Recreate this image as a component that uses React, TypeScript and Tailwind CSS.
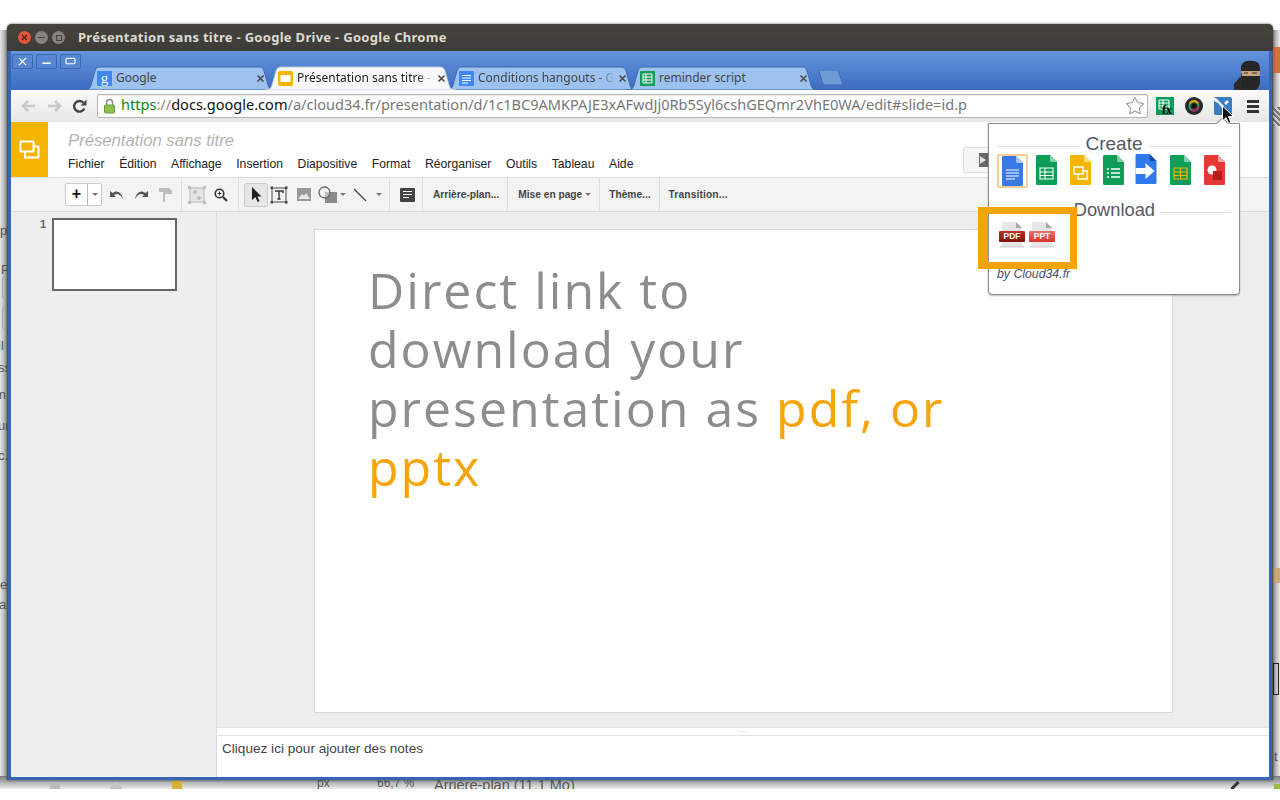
import React from "react";
import { Star } from "lucide-react";

const chromeFont = "font-['Noto_Sans',sans-serif]";
const docsFont = "font-['Liberation_Sans',Arial,sans-serif]";

function TabShape({ active }: { active?: boolean }) {
  return (
    <svg className="absolute inset-0 w-full h-full" viewBox="0 0 191 24" preserveAspectRatio="none">
      <path
        d="M0 24 C5 24 6 22 7 19 L11 5 C12 2 13 1 17 1 L174 1 C178 1 179 2 180 5 L184 19 C185 22 186 24 191 24 Z"
        fill={active ? "#f9f9f9" : "#9dc2ef"}
        stroke={active ? "#b9c6dc" : "#3f69ad"}
        strokeWidth="1"
      />
    </svg>
  );
}

function Tab({ title, active, fade, children }: { title: string; active?: boolean; fade?: boolean; children: React.ReactNode }) {
  return (
    <div className={`relative w-[191px] h-[24px] -mr-[10px] ${active ? "z-10" : ""}`}>
      <TabShape active={active} />
      <div className="relative flex items-center h-full pl-[13px] pr-[10px]">
        <span className="w-[15px] h-[15px] shrink-0 mr-[4px]">{children}</span>
        <span
          className={`w-[137px] overflow-hidden whitespace-nowrap text-[12px] ${chromeFont} ${active ? "text-[#222]" : "text-[#444]"} ${
            fade ? "[mask-image:linear-gradient(to_right,black_88%,transparent)]" : ""
          }`}
        >
          {title}
        </span>
        <svg className="ml-auto" width="9" height="9" viewBox="0 0 9 9">
          <path d="M1.5 1.5 L7.5 7.5 M7.5 1.5 L1.5 7.5" stroke="#4a4a4a" strokeWidth="1.6" />
        </svg>
      </div>
    </div>
  );
}

function SheetFavicon() {
  return (
    <svg viewBox="0 0 15 15" className="w-full h-full">
      <rect width="15" height="15" rx="1" fill="#0f9d58" />
      <path d="M3 3 H12 V12 H3 Z M3 6 H12 M3 9 H12 M6 3 V12" stroke="#fff" fill="none" />
    </svg>
  );
}

function FileIcon({ color, dark, children, className }: { color: string; dark: string; children?: React.ReactNode; className?: string }) {
  return (
    <svg viewBox="0 0 21 30" className={className ?? "w-[21px] h-[30px]"}>
      <path d="M1.5 0 H14 L21 7 V28.5 C21 29.5 20.5 30 19.5 30 H1.5 C.5 30 0 29.5 0 28.5 V1.5 C0 .5 .5 0 1.5 0 Z" fill={color} />
      <path d="M14 0 L21 7 H15.5 C14.6 7 14 6.4 14 5.5 Z" fill={dark} />
      {children}
    </svg>
  );
}

function Sep() {
  return <div className="w-px h-[34px] bg-[#dedede] shrink-0" />;
}

function Caret({ className = "" }: { className?: string }) {
  return <span className={`w-0 h-0 border-x-[3px] border-x-transparent border-t-[3px] border-t-[#777] ${className}`} />;
}

function PdfIcon({ label, from, to, ml }: { label: string; from: string; to: string; ml?: string }) {
  return (
    <div className={`relative w-[26px] h-[27px] ${ml ?? ""}`}>
      <svg viewBox="0 0 26 27" className="absolute inset-0">
        <path d="M3 1 H17 L23 7 V25 H3 Z" fill="#e6e6e6" />
        <path d="M17 1 L23 7 H17 Z" fill="#a9a9a9" />
        <rect x="1" y="25" width="24" height="1.5" fill="#d5d5d5" />
      </svg>
      <div
        className={`absolute left-0 top-[10px] w-[26px] h-[11px] rounded-[1px] text-white text-[8.5px] font-bold leading-[11px] text-center ${docsFont} ${from} ${to} bg-gradient-to-b`}
      >
        {label}
      </div>
    </div>
  );
}

function BehindText({ children, top, left }: { children: string; top: number; left: number }) {
  return (
    <span className={`absolute ${docsFont} text-[13px] text-[#555]`} style={{ top, left }}>
      {children}
    </span>
  );
}

export default function App() {
  return (
    <div className="relative w-[1280px] h-[800px] bg-white overflow-hidden">
      {/* what shows behind the chrome window */}
      <div className="absolute left-0 top-[30px] w-[8px] h-[759px] bg-gradient-to-r from-[#e6e6e6] to-[#8f8f8f] overflow-hidden">
        <BehindText top={191} left={0}>p</BehindText>
        <BehindText top={230} left={1}>P</BehindText>
        <div className="absolute left-[2px] top-[247px] w-[8px] h-[22px] border border-[#aaa] rounded-[2px]" />
        <div className="absolute left-[2px] top-[277px] w-[8px] h-[22px] border border-[#aaa] rounded-[2px]" />
        <BehindText top={306} left={-2}>il</BehindText>
        <BehindText top={328} left={-2}>ss</BehindText>
        <BehindText top={355} left={-5}>m</BehindText>
        <BehindText top={386} left={-2}>ur</BehindText>
        <BehindText top={416} left={-2}>c.</BehindText>
        <BehindText top={545} left={0}>e</BehindText>
        <BehindText top={565} left={-1}>ai</BehindText>
      </div>
      <div className="absolute left-[1272px] top-[30px] w-[8px] h-[759px] bg-gradient-to-r from-[#8a8a8a] to-[#ececec] overflow-hidden">
        <div className="absolute left-[2px] top-[17px] w-[6px] h-[26px] bg-[#dd6b3d]" />
        <div className="absolute left-[1px] top-[77px] w-[7px] h-[19px] bg-[repeating-linear-gradient(45deg,#777_0,#777_2px,#ccc_2px,#ccc_4px)]" />
        <div className="absolute left-0 top-[538px] w-[8px] h-[15px] bg-[#c9a877]" />
        <div className="absolute left-[1px] top-[633px] w-[6px] h-[32px] border border-[#222]" />
        <BehindText top={717} left={2}>t</BehindText>
      </div>
      <div className="absolute left-0 top-[776px] w-[1280px] h-[13px] bg-gradient-to-b from-[#7d7d7d] to-[#ededed] overflow-hidden">
        <span className="absolute left-[50px] top-[6px] w-[10px] h-[7px] rounded-t-full bg-[#bbb]" />
        <span className="absolute left-[110px] top-[6px] w-[12px] h-[7px] rounded-t-full bg-[#c4c4c4]" />
        <span className="absolute left-[172px] top-[5px] w-[10px] h-[8px] bg-[#d9b13a]" />
        <span className={`absolute left-[317px] top-[-2px] text-[12px] text-[#555] ${docsFont}`}>px</span>
        <span className={`absolute left-[377px] top-[-2px] text-[12px] text-[#555] ${docsFont}`}>66,7 %</span>
        <span className={`absolute left-[434px] top-[-1px] text-[14.5px] text-[#555] ${docsFont}`}>Arrière-plan (11.1 Mo)</span>
        <span className="absolute left-[1230px] top-[8px] w-[10px] h-[3px] bg-[#333] -rotate-45" />
        <span className="absolute left-[1274px] top-[8px] w-[6px] h-[5px] bg-[#9bbb3b]" />
      </div>

      <div className="relative ml-[7px] mt-[24px] w-[1266px] h-[756px] flex flex-col rounded-t-[5px] overflow-hidden bg-[#555] shadow-[0_0_3px_rgba(0,0,0,0.6)]">
        {/* title bar */}
        <div className="h-[27px] shrink-0 flex items-center bg-gradient-to-b from-[#45443f] to-[#3c3b37] pl-[11px]">
          <span className="w-[13px] h-[13px] rounded-full bg-[#e2553c] flex items-center justify-center">
            <svg width="7" height="7" viewBox="0 0 7 7"><path d="M1 1 L6 6 M6 1 L1 6" stroke="#4b2017" strokeWidth="1.2" /></svg>
          </span>
          <span className="w-[13px] h-[13px] ml-[4px] rounded-full bg-[#85847f] flex items-center justify-center">
            <span className="w-[7px] h-[1.5px] bg-[#45443f]" />
          </span>
          <span className="w-[13px] h-[13px] ml-[4px] rounded-full bg-[#85847f] flex items-center justify-center">
            <span className="w-[6px] h-[6px] border border-[#45443f]" />
          </span>
          <span className={`ml-[13px] text-[13px] font-bold text-[#dfdbd2] tracking-[0.29px] whitespace-nowrap ${chromeFont}`}>
            Présentation sans titre - Google Drive - Google Chrome
          </span>
        </div>

        <div className="flex-1 min-h-0 mx-px flex flex-col border-x-[3px] border-b-[3px] border-[#3565b5] bg-[#3565b5]">
          {/* tab strip */}
          <div className="h-[39px] shrink-0 flex items-end bg-gradient-to-b from-[#6494dc] to-[#3c6cc0] relative">
            <div className="self-start mt-[3px] ml-[1px] flex gap-[3px]">
              {[
                <path key="x" d="M6.5 2.5 L14.5 10.5 M14.5 2.5 L6.5 10.5" stroke="#fff" strokeWidth="1.5" />,
                <path key="m" d="M6 8.5 H15" stroke="#fff" strokeWidth="1.6" />,
                <rect key="r" x="5.5" y="3" width="10" height="6" rx="1.5" stroke="#fff" strokeWidth="1.3" fill="none" />,
              ].map((glyph, i) => (
                <svg key={i} width="21" height="15" viewBox="0 0 21 13" className="rounded-[2px] border border-[#3c68b0] bg-[#5787d2]">
                  {glyph}
                </svg>
              ))}
            </div>
            <div className="flex ml-[3px]">
              <Tab title="Google">
                <svg viewBox="0 0 15 15" className="w-full h-full">
                  <rect width="15" height="15" rx="1" fill="#4285f4" />
                  <text x="7.5" y="11.5" textAnchor="middle" fontSize="15" fontFamily="Liberation Serif, serif" fill="#fff">g</text>
                </svg>
              </Tab>
              <Tab title="Présentation sans titre - Google Drive" active fade>
                <svg viewBox="0 0 15 15" className="w-full h-full">
                  <rect width="15" height="15" rx="2" fill="#f4b400" />
                  <rect x="2.5" y="4" width="10" height="7" fill="#fff" />
                </svg>
              </Tab>
              <Tab title="Conditions hangouts - Google Drive" fade>
                <svg viewBox="0 0 15 15" className="w-full h-full">
                  <rect width="15" height="15" rx="1" fill="#4285f4" />
                  <path d="M3 4.5 H12 M3 7 H12 M3 9.5 H12 M3 12 H9" stroke="#fff" />
                </svg>
              </Tab>
              <Tab title="reminder script">
                <SheetFavicon />
              </Tab>
            </div>
            <svg className="ml-[11px] mb-[5px]" width="24" height="15" viewBox="0 0 24 15">
              <path d="M0 1 C0 .5 .5 0 1 0 L17 0 C18 0 19 1 19.5 2 L23.5 13 C24 14 23.5 15 22 15 L7 15 C5 15 4 14 3.5 13 Z" fill="#6f9ad8" stroke="#3f69ad" />
            </svg>
            {/* ninja avatar */}
            <svg className="ml-auto mr-[7px]" width="28" height="30" viewBox="0 0 28 30">
              <path d="M0 24 L6 17 L9 19 L9 30 L0 30 Z" fill="#2b2b2b" />
              <path d="M7 30 L7 8 C7 3 11 0 18 1 C23 1 26 3 26 9 L26 20 C26 26 24 28 22 30 Z" fill="#262626" />
              <path d="M7 11 H26 V16 H8 Z" fill="#c9a27a" />
              <path d="M10 13 H14 M18 13 H23" stroke="#333" strokeWidth="1.2" />
            </svg>
          </div>

          {/* omnibox row */}
          <div className="h-[32px] shrink-0 flex items-center bg-gradient-to-b from-[#fbfbfb] to-[#e6e6e6] relative z-0">
            <svg className="ml-[9px]" width="17" height="14" viewBox="0 0 17 14">
              <path d="M15 7 H3 M8 2 L3 7 L8 12" stroke="#c9c9c9" strokeWidth="2.6" fill="none" />
            </svg>
            <svg className="ml-[9px]" width="17" height="14" viewBox="0 0 17 14">
              <path d="M2 7 H14 M9 2 L14 7 L9 12" stroke="#c9c9c9" strokeWidth="2.6" fill="none" />
            </svg>
            <svg className="ml-[9px]" width="15" height="15" viewBox="0 0 15 15">
              <path d="M12.3 9.5 A5.3 5.3 0 1 1 11.2 3.6" stroke="#444" strokeWidth="2.4" fill="none" />
              <path d="M8.5 6.5 H14.5 V0.5 Z" fill="#444" />
            </svg>
            <div className="ml-[10px] w-[1051px] h-[24px] flex items-center bg-white border border-[#b5b5b5] rounded-[2px] shadow-[inset_0_1px_1px_rgba(0,0,0,0.08)]">
              <svg className="ml-[5px]" width="13" height="16" viewBox="0 0 13 16">
                <path d="M3.5 7 V4.5 A3 3 0 0 1 9.5 4.5 V7" stroke="#8a8a8a" strokeWidth="1.5" fill="none" />
                <rect x="1.5" y="7" width="10" height="8" rx="1" fill="#8cc152" stroke="#6b9a3a" />
              </svg>
              <span className={`ml-[5px] mb-[2px] text-[14.55px] whitespace-nowrap ${chromeFont}`}>
                <span className="text-[#0a8a0a]">https</span>
                <span className="text-[#888]">://</span>
                <span className="text-[#111]">docs.google.com</span>
                <span className="text-[#777]">/a/cloud34.fr/presentation/d/1c1BC9AMKPAJE3xAFwdJj0Rb5Syl6cshGEQmr2VhE0WA/edit#slide=id.p</span>
              </span>
              <Star className="ml-auto mr-[2px] w-[20px] h-[20px] text-[#999]" strokeWidth={1.3} />
            </div>
            <svg className="ml-[8px]" width="18" height="18" viewBox="0 0 18 18">
              <rect width="18" height="18" fill="#0f9d58" />
              <path d="M3 3 H13 V12 H3 Z M3 6 H13 M3 9 H13 M7 3 V12" stroke="#fff" fill="none" />
              <text x="6" y="17" fontSize="12" fontWeight="700" fontFamily="Liberation Serif, serif" fill="#000">fx</text>
            </svg>
            <svg className="ml-[11px]" width="18" height="18" viewBox="0 0 18 18">
              <circle cx="9" cy="9" r="9" fill="#2a2a2a" />
              <circle cx="9" cy="9" r="4.5" fill="none" stroke="#26a269" strokeWidth="2" />
              <path d="M5 6.5 A4.5 4.5 0 0 1 13 6.5" stroke="#e5a50a" strokeWidth="2" fill="none" />
              <path d="M13.2 10 A4.5 4.5 0 0 1 7 13" stroke="#c01c6b" strokeWidth="2" fill="none" />
              <circle cx="9" cy="9" r="2" fill="#111" />
            </svg>
            <svg className="ml-[11px]" width="18" height="18" viewBox="0 0 18 18">
              <rect width="18" height="18" rx="2" fill="#3a7dbf" />
              <path d="M0 1 C3 1 4 3 6 5 L10 9 L8 11 L4 6 L0 4 Z M13 3 L10 6 L12 8 L15 5 Z" fill="#e8f1fa" />
            </svg>
            <div className="ml-[15px] flex flex-col gap-[2px]">
              <span className="w-[12px] h-[3px] bg-[#333]" />
              <span className="w-[12px] h-[3px] bg-[#333]" />
              <span className="w-[12px] h-[3px] bg-[#333]" />
            </div>
          </div>

          {/* slides app */}
          <div className={`flex-1 min-h-0 flex flex-col bg-white ${docsFont}`}>
            <div className="h-[56px] shrink-0 flex border-b border-[#dcdcdc] bg-white">
              <div className="w-[37px] flex items-center justify-center bg-[#f4b400]">
                <svg width="21" height="19" viewBox="0 0 21 19">
                  <path d="M1.5 1.5 H14.5 V11.5 H1.5 Z M6 11.5 V17.5 H19.5 V6.5 H14.5" stroke="#fff" strokeWidth="2" fill="none" strokeLinejoin="round" />
                </svg>
              </div>
              <div className="ml-[20px] flex flex-col">
                <div className="mt-[8px] h-[22px] text-[16.7px] italic leading-[22px] text-[#b3b3b3] whitespace-nowrap">Présentation sans titre</div>
                <div className="mt-[5px] flex gap-[14.6px] text-[12.2px] leading-[15px] text-[#222] whitespace-nowrap">
                  <span>Fichier</span>
                  <span>Édition</span>
                  <span>Affichage</span>
                  <span>Insertion</span>
                  <span>Diapositive</span>
                  <span>Format</span>
                  <span>Réorganiser</span>
                  <span>Outils</span>
                  <span>Tableau</span>
                  <span>Aide</span>
                </div>
              </div>
            </div>

            <div className="h-[34px] shrink-0 flex items-center bg-[#f3f3f3] border-b border-[#dcdcdc] whitespace-nowrap">
              <div className="ml-[54px] w-[37px] h-[23px] flex bg-white border border-[#ccc] rounded-[2px]">
                <span className="w-[21px] text-center text-[16px] leading-[19px] font-bold text-[#111]">+</span>
                <span className="flex-1 flex items-center justify-center border-l border-[#bbb]"><Caret /></span>
              </div>
              <svg className="ml-[8px]" width="15" height="10" viewBox="0 0 15 10">
                <path d="M0 1 V7 H6 L4 5 C7 3 10 4 13 9 C12 3 7 -1 2.5 3 Z" fill="#555" />
              </svg>
              <svg className="ml-[8px]" width="15" height="10" viewBox="0 0 15 10">
                <path d="M15 1 V7 H9 L11 5 C8 3 5 4 2 9 C3 3 8 -1 12.5 3 Z" fill="#555" />
              </svg>
              <svg className="ml-[10px]" width="15" height="14" viewBox="0 0 15 14">
                <path d="M1 0 H12 V4 H1 Z M12 2 H14 V6 H7 V14 H5 V4" fill="#bdbdbd" />
              </svg>
              <div className="ml-[8px]"><Sep /></div>
              <svg className="ml-[6px]" width="18" height="18" viewBox="0 0 18 18">
                <path d="M2 2 H16 V16 H2 Z" stroke="#bbb" fill="#e4e4e4" />
                <rect x="0" y="0" width="3" height="3" fill="#bbb" />
                <rect x="15" y="0" width="3" height="3" fill="#bbb" />
                <rect x="0" y="15" width="3" height="3" fill="#bbb" />
                <rect x="15" y="15" width="3" height="3" fill="#bbb" />
                <path d="M5 6 H9 M7 4 V8 M9 12 H13 M11 10 V14" stroke="#aaa" />
              </svg>
              <svg className="ml-[8px]" width="14" height="14" viewBox="0 0 14 14">
                <circle cx="5.5" cy="5.5" r="4.3" stroke="#333" strokeWidth="1.6" fill="none" />
                <path d="M9 9 L13 13" stroke="#333" strokeWidth="2.2" />
                <path d="M3.5 5.5 H7.5 M5.5 3.5 V7.5" stroke="#333" />
              </svg>
              <div className="ml-[10px]"><Sep /></div>
              <div className="ml-[5px] w-[24px] h-[24px] flex items-center justify-center bg-[#e6e6e6] border border-[#ccc] rounded-[2px]">
                <svg width="11" height="15" viewBox="0 0 11 15">
                  <path d="M1 0 L10.5 9.5 H6.5 L8.5 14 L6.5 15 L4.5 10 L1 13 Z" fill="#222" />
                </svg>
              </div>
              <svg className="ml-[2px]" width="18" height="18" viewBox="0 0 18 18">
                <path d="M2 2 H16 V16 H2 Z" stroke="#444" fill="none" />
                <rect x="0.5" y="0.5" width="2.5" height="2.5" fill="#444" />
                <rect x="15" y="0.5" width="2.5" height="2.5" fill="#444" />
                <rect x="0.5" y="15" width="2.5" height="2.5" fill="#444" />
                <rect x="15" y="15" width="2.5" height="2.5" fill="#444" />
                <path d="M5 5 H13 V7 M9 5 V13 M7.5 13 H10.5" stroke="#333" strokeWidth="1.4" fill="none" />
              </svg>
              <svg className="ml-[9px]" width="14" height="13" viewBox="0 0 14 13">
                <rect width="14" height="13" fill="#999" />
                <path d="M1 11 L5 6 L7 8 L9 5 L13 11 Z" fill="#e8e8e8" />
              </svg>
              <svg className="ml-[7px]" width="19" height="17" viewBox="0 0 19 17">
                <rect x="7" y="6" width="12" height="11" fill="#8a8a8a" />
                <circle cx="6.5" cy="6.5" r="5.5" stroke="#666" strokeWidth="1.3" fill="#f3f3f3" fillOpacity="0.5" />
              </svg>
              <Caret className="ml-[3px]" />
              <svg className="ml-[7px]" width="14" height="14" viewBox="0 0 14 14">
                <path d="M1 1 L13 13" stroke="#444" strokeWidth="1.3" />
              </svg>
              <Caret className="ml-[9px]" />
              <div className="ml-[7px]"><Sep /></div>
              <svg className="ml-[10px]" width="15" height="14" viewBox="0 0 15 14">
                <rect width="15" height="14" rx="1" fill="#444" />
                <path d="M3 3.5 H12 M3 6.5 H12 M3 9.5 H9" stroke="#fff" />
              </svg>
              <div className="ml-[7px]"><Sep /></div>
              <span className="ml-[10px] pt-px text-[10.2px] font-bold text-[#444]">Arrière-plan...</span>
              <div className="ml-[8px]"><Sep /></div>
              <span className="ml-[10px] pt-px text-[10.2px] font-bold text-[#444]">Mise en page</span>
              <Caret className="ml-[3px]" />
              <div className="ml-[8px]"><Sep /></div>
              <span className="ml-[9px] pt-px text-[10.2px] font-bold text-[#444]">Thème...</span>
              <div className="ml-[8px]"><Sep /></div>
              <span className="ml-[9px] pt-px text-[10.2px] tracking-[0.15px] font-bold text-[#444]">Transition...</span>
            </div>

            <div className="flex-1 min-h-0 flex">
              {/* filmstrip */}
              <div className="w-[206px] shrink-0 flex items-start bg-[#eeeeee] border-r border-[#dcdcdc] pt-[6px]">
                <span className="w-[35px] text-right text-[11px] leading-[12px] font-bold text-[#666]">1</span>
                <div className="ml-[6px] w-[125px] h-[73px] bg-white border-2 border-[#666]" />
              </div>
              <div className="flex-1 min-w-0 flex flex-col">
                <div className="flex-1 min-h-0 bg-[#ededed] pl-[97px] pt-[17px]">
                  <div className="h-[484px] w-[859px] bg-white border border-[#d8d8d8] pl-[53px] pt-[31px]">
                    <p className="text-[50px] leading-[59px] tracking-[2px] text-[#8d8d8d] whitespace-nowrap font-['Open_Sans',sans-serif]">
                      Direct link to
                      <br />
                      download your
                      <br />
                      presentation as <span className="text-[#f6a40a]">pdf, or</span>
                      <br />
                      <span className="text-[#f6a40a]">pptx</span>
                    </p>
                  </div>
                </div>
                <div className="h-[7px] box-content shrink-0 flex items-center justify-center bg-white border-t border-b border-[#e4e4e4]">
                  <span className="text-[#aaa] text-[8px] leading-[6px] tracking-[0.5px]">···</span>
                </div>
                <div className="h-[41px] shrink-0 bg-white pl-[5px] pt-[4px] text-[13.6px] leading-[18px] text-[#444]">
                  Cliquez ici pour ajouter des notes
                </div>
              </div>
            </div>
          </div>
        </div>
      </div>

      {/* present button peeking from under the popup */}
      <div className="absolute left-[963px] top-[147px] w-[30px] h-[26px] bg-[#f5f5f5] border border-[#ddd] rounded-[2px] flex items-center pl-[15px]">
        <svg width="9" height="14" viewBox="0 0 9 14">
          <rect width="9" height="14" fill="#666" />
          <path d="M1 3 L7 7 L1 11 Z" fill="#ddd" />
        </svg>
      </div>

      {/* extension popup */}
      <div className={`absolute left-[988px] top-[123px] w-[252px] h-[172px] bg-white border border-[#8a8a8a] rounded-b-[4px] ${docsFont} shadow-[0_1px_2px_rgba(0,0,0,0.25)]`}>
        <span className="absolute left-[229px] top-[-5px] w-[9px] h-[9px] rotate-45 bg-white border-l border-t border-[#8a8a8a]" />
        <div className="ml-[8px] mr-[8px] mt-[10px] h-[20px] flex items-center">
          <span className="flex-1 h-px bg-[#dfdfdf] mt-[4px]" />
          <span className="px-[6px] text-[19px] leading-[20px] text-[#555b66]">Create</span>
          <span className="flex-1 h-px bg-[#dfdfdf] mt-[4px]" />
        </div>
        <div className="relative h-[34px] flex items-start">
          <div className="ml-[8px] w-[31px] h-[34px] flex items-center justify-center border-2 border-[#f6cf94] rounded-[2px]">
            <FileIcon color="#3b78e7" dark="#a8c4f4">
              <path d="M4 14 H17 M4 17 H17 M4 20 H17 M4 23 H13" stroke="#fff" strokeWidth="1.2" />
            </FileIcon>
          </div>
          <div className="ml-[8px] mt-[1px]">
            <FileIcon color="#0f9d58" dark="#87ceac">
              <path d="M4 13 H17 V24 H4 Z M4 17 H17 M4 20.5 H17 M9 13 V24" stroke="#fff" strokeWidth="1.1" fill="none" />
            </FileIcon>
          </div>
          <div className="ml-[13px] mt-[1px]">
            <FileIcon color="#f4b400" dark="#fbdd80">
              <path d="M4 12 H13 V19 H4 Z M8 19 V24 H17 V16 H13" stroke="#fff" strokeWidth="1.3" fill="none" />
            </FileIcon>
          </div>
          <div className="ml-[12px] mt-[1px]">
            <FileIcon color="#0f9d58" dark="#87ceac">
              <path d="M4 14 H6 M4 18 H6 M4 22 H6 M8 14 H17 M8 18 H17 M8 22 H17" stroke="#fff" strokeWidth="1.3" />
            </FileIcon>
          </div>
          <div className="ml-[10px]">
            <FileIcon color="#2f78ed" dark="#174ea6" className="w-[24px] h-[30px]">
              <path d="M0 14 H10 V9 L19 17 L10 25 V20 H0 Z" fill="#fff" />
            </FileIcon>
          </div>
          <div className="ml-[12px] mt-[1px]">
            <FileIcon color="#0f9d58" dark="#87ceac">
              <path d="M4 13 H17 V24 H4 Z M4 17 H17 M4 20.5 H17 M10.5 13 V24" stroke="#f4b400" strokeWidth="1.2" fill="none" />
            </FileIcon>
          </div>
          <div className="ml-[13px] mt-[1px]">
            <FileIcon color="#e53935" dark="#f4a9a7">
              <circle cx="8" cy="15" r="4.5" fill="#fff" />
              <rect x="9" y="16" width="9" height="9" fill="#b71c1c" />
            </FileIcon>
          </div>
        </div>
        <div className="ml-[8px] mr-[8px] mt-[12px] h-[20px] flex items-center justify-end">
          <span className="pr-[5px] text-[18.3px] leading-[20px] text-[#555b66]">Download</span>
          <span className="w-[71px] h-px bg-[#dfdfdf] mt-[5px]" />
        </div>
        <div className="mt-[1px] ml-[10px] flex">
          <PdfIcon label="PDF" from="from-[#c1302a]" to="to-[#7d1410]" />
          <PdfIcon label="PPT" from="from-[#f0706a]" to="to-[#d2322c]" ml="ml-[4px]" />
        </div>
        <div className="mt-[19px] ml-[8px] text-[12.3px] leading-[15px] italic text-[#4a5166]">by Cloud34.fr</div>
      </div>

      {/* orange highlight */}
      <div className="absolute left-[978px] top-[207px] w-[99px] h-[62px] border-y-[7px] border-r-[7px] border-l-[10px] border-[#f5a30b]" />

      {/* mouse pointer */}
      <svg className="absolute left-[1221px] top-[105px]" width="14" height="20" viewBox="0 0 13 20">
        <path d="M1 1 L1 16 L4.5 12.5 L7 18.5 L9.5 17.5 L7 11.5 L12 11.5 Z" fill="#111" stroke="#fff" strokeWidth="1" />
      </svg>
    </div>
  );
}
